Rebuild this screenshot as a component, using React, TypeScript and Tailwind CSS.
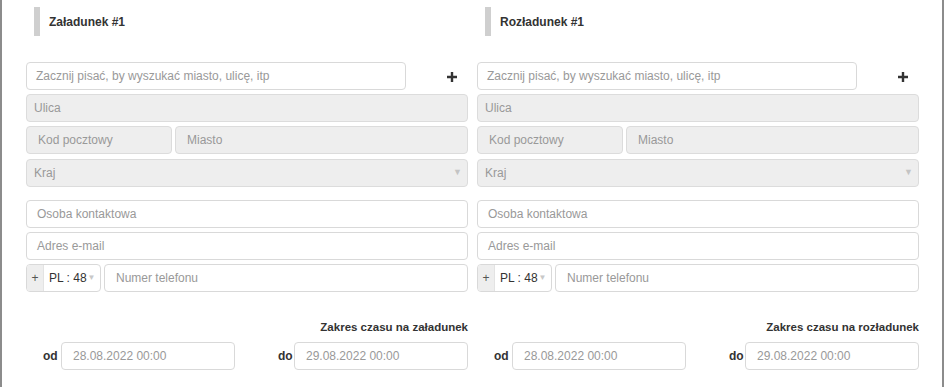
import React from 'react';

const font = { fontFamily: '"Liberation Sans", Arial, sans-serif' };

interface Column {
    title: string;
    rangeLabel: string;
}

const columns: Column[] = [
    { title: "Załadunek #1", rangeLabel: "Zakres czasu na załadunek" },
    { title: "Rozładunek #1", rangeLabel: "Zakres czasu na rozładunek" },
];

const box = "h-[28px] rounded-[4px] border flex items-center text-[12px]";
const plain = `${box} bg-white border-[#d9d9d9] text-[#999]`;
const disabled = `${box} bg-[#eeeeee] border-[#dcdcdc] text-[#999]`;

function AddressColumn({ col }: { col: Column }) {
    return (
        <div className="w-[442px] flex flex-col">
            <div className="flex items-center mt-[7px] ml-[8px]">
                <div className="w-[6px] h-[29px] bg-[#cfcfcf]" />
                <span className="ml-[9px] text-[12px] font-bold text-[#333]">{col.title}</span>
            </div>

            <div className="flex items-center mt-[26px]">
                <div className={`${plain} w-[380px] pl-[9px]`}>Zacznij pisać, by wyszukać miasto, ulicę, itp</div>
                <span className="ml-[41px] mt-[2px] text-[#333]">
                    <svg width="10" height="10" viewBox="0 0 10 10">
                        <path d="M5 0v10M0 5h10" stroke="currentColor" strokeWidth="2.4" />
                    </svg>
                </span>
            </div>

            <div className={`${disabled} mt-[4px] pl-[7px]`}>Ulica</div>

            <div className="flex gap-[3px] mt-[4px]">
                <div className={`${disabled} w-[146px] pl-[11px]`}>Kod pocztowy</div>
                <div className={`${disabled} flex-1 pl-[11px]`}>Miasto</div>
            </div>

            <div className={`${disabled} mt-[5px] pl-[7px] justify-between pr-[5px]`}>
                <span>Kraj</span>
                <span className="text-[9px] text-[#c4c4c4]">▼</span>
            </div>

            <div className={`${plain} mt-[13px] pl-[10px]`}>Osoba kontaktowa</div>
            <div className={`${plain} mt-[4px] pl-[10px]`}>Adres e-mail</div>

            <div className="flex gap-[3px] mt-[4px]">
                <div className="h-[28px] w-[75px] rounded-[4px] border border-[#d9d9d9] flex overflow-hidden text-[12px]">
                    <div className="w-[17px] bg-[#eeeeee] border-r border-[#e3e3e3] flex items-center justify-center text-[#555]">+</div>
                    <div className="flex-1 flex items-center pl-[5px] text-[#333]">
                        PL : 48
                        <span className="ml-[1px] text-[8px] text-[#c8c8c8]">▼</span>
                    </div>
                </div>
                <div className={`${plain} flex-1 pl-[11px]`}>Numer telefonu</div>
            </div>

            <div className="mt-[27px] text-right text-[11.5px] font-bold text-[#333]">{col.rangeLabel}</div>

            <div className="flex items-center mt-[6px] text-[12px]">
                <span className="ml-[17px] w-[14px] font-bold text-[#333]">od</span>
                <div className={`${plain} ml-[4px] w-[174px] pl-[11px] text-[#555]`}>28.08.2022 00:00</div>
                <span className="ml-[43px] w-[14px] font-bold text-[#333]">do</span>
                <div className={`${plain} ml-[2px] flex-1 pl-[11px] text-[#555]`}>29.08.2022 00:00</div>
            </div>
        </div>
    );
}

export default function App() {
    return (
        <div style={font} className="w-[945px] h-[387px] bg-white overflow-hidden">
            <div className="w-[944px] h-full border-l-2 border-r-2 border-[#8c8c8c] flex gap-[9px] pl-[24px]">
                {columns.map((col) => (
                    <AddressColumn key={col.title} col={col} />
                ))}
            </div>
        </div>
    );
}
